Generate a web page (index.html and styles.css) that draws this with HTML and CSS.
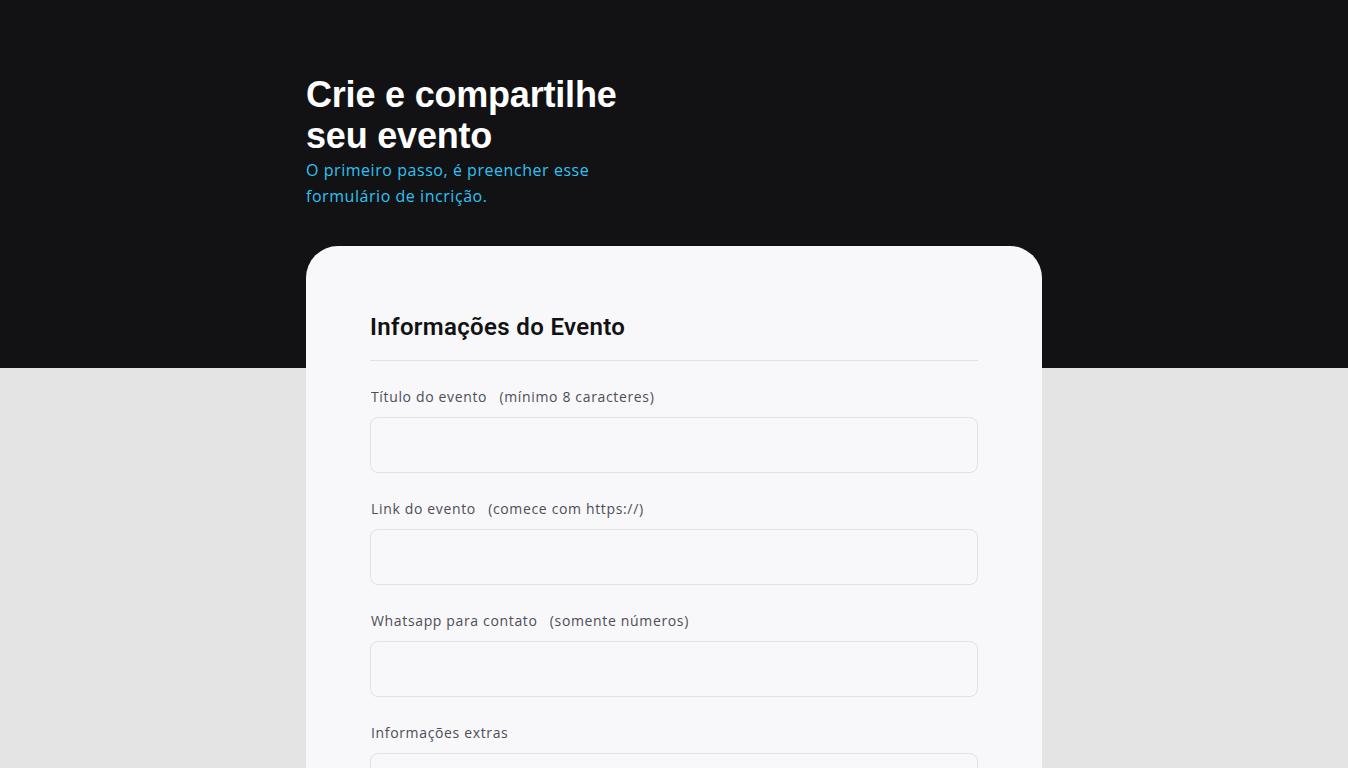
FILE: index.html
```html
<!DOCTYPE html>
<html lang="pt-BR">
<head>
<meta charset="utf-8">
<title>Crie e compartilhe seu evento</title>
<link rel="stylesheet" href="styles.css">
</head>
<body>
<div class="page">
  <header class="hero">
    <div class="container">
      <h1 class="hero-title">Crie e compartilhe<br>seu evento</h1>
      <p class="hero-sub">O primeiro passo, é preencher esse<br>formulário de incrição.</p>
    </div>
  </header>
  <main class="container">
    <form class="card">
      <h2 class="card-title">Informações do Evento</h2>
      <div class="field">
        <label class="label">Título do evento <span class="hint">(mínimo 8 caracteres)</span></label>
        <input class="input" type="text">
      </div>
      <div class="field">
        <label class="label">Link do evento <span class="hint">(comece com https://)</span></label>
        <input class="input" type="text">
      </div>
      <div class="field">
        <label class="label">Whatsapp para contato <span class="hint">(somente números)</span></label>
        <input class="input" type="text">
      </div>
      <div class="field">
        <label class="label">Informações extras</label>
        <textarea class="input textarea"></textarea>
      </div>
    </form>
  </main>
</div>
</body>
</html>
```
FILE: styles.css
```css
* { box-sizing: border-box; }
html, body { margin: 0; padding: 0; }
body {
  background: linear-gradient(to bottom, #121214 0, #121214 368px, #e4e4e4 368px);
  font-family: "Open Sans", sans-serif;
  min-height: 768px;
  overflow: hidden;
}
.container {
  width: 736px;
  margin: 0 auto;
}
.hero .container { padding-top: 74px; }
.hero-title {
  margin: 0;
  color: #ffffff;
  font-family: "Liberation Sans", Arial, sans-serif;
  font-weight: 700;
  font-size: 36px;
  line-height: 41px;
  letter-spacing: -0.2px;
}
.hero-sub {
  margin: 0;
  padding-top: 1px;
  color: #2fc2f2;
  font-size: 16px;
  line-height: 26px;
  letter-spacing: 0.55px;
}
.card {
  margin-top: 37px;
  background: #f8f8fa;
  border-radius: 32px;
  padding: 67px 64px 0;
  height: 600px;
}
.card-title {
  margin: 0;
  font-family: Roboto, "Liberation Sans", sans-serif;
  font-weight: 600;
  font-size: 24px;
  line-height: 28px;
  letter-spacing: 0.35px;
  color: #121214;
  padding-bottom: 19px;
  border-bottom: 1px solid #e1e1e6;
  margin-bottom: 25px;
}
.field {
  display: flex;
  flex-direction: column;
  gap: 10px;
  margin-bottom: 25px;
}
.label {
  padding-left: 1px;
  font-size: 14px;
  line-height: 21px;
  color: #4d4d57;
  letter-spacing: 0.65px;
}
.hint { margin-left: 8px; }
.input {
  height: 56px;
  border: 1px solid #e1e1e6;
  border-radius: 8px;
  background: #f8f8fa;
  font: inherit;
  padding: 0 16px;
  resize: none;
}
.textarea { height: 120px; }
```
